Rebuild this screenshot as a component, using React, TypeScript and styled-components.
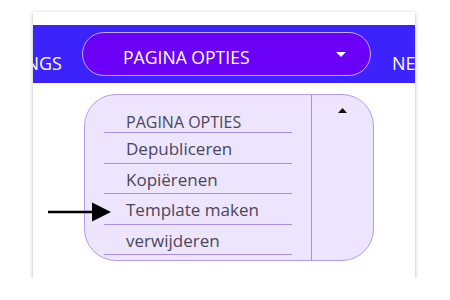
import React from "react";
import styled, { createGlobalStyle } from "styled-components";

const Global = createGlobalStyle`
  html, body { margin: 0; padding: 0; background: #ffffff; }
  body { font-family: "Open Sans", "Liberation Sans", sans-serif; }
  * { box-sizing: border-box; }
`;

const Card = styled.div`
  position: relative;
  margin: 12px 0 0 33px;
  width: 382px;
  height: 266px;
  padding-top: 13px;
  background: #ffffff;
  box-shadow: 0 1px 4px rgba(0, 0, 0, 0.28);
  overflow: hidden;
`;

const NavBar = styled.nav`
  height: 58px;
  background: #3c23fc;
  display: grid;
  grid-template-columns: minmax(0, 1fr) auto minmax(0, 1fr);
  column-gap: 20px;
  align-items: center;
  padding-left: 5px;
`;

const NavCell = styled.div<{ $side: "left" | "right" }>`
  display: flex;
  justify-content: ${(p) => (p.$side === "left" ? "flex-end" : "flex-start")};
  padding-top: 17px;
  padding-left: ${(p) => (p.$side === "right" ? "1px" : "0")};
  color: #ffffff;
  font-size: 18px;
  line-height: 22px;
  white-space: nowrap;
`;

const Pill = styled.button`
  width: 289px;
  height: 44px;
  border: 1px solid #c8a7ff;
  border-radius: 22px;
  background: #6a00f6;
  color: #ffffff;
  font-family: "Open Sans", "Liberation Sans", sans-serif;
  font-size: 17.6px;
  line-height: 22px;
  display: flex;
  align-items: center;
  justify-content: space-between;
  padding: 6px 24px 0 40px;
  cursor: pointer;
`;

const CaretSvg = styled.svg`
  display: block;
  margin-top: -6px;
`;

const Panel = styled.div`
  margin: 11px 0 0 51px;
  width: 290px;
  height: 167px;
  border: 1px solid #b59be9;
  border-radius: 32px;
  background: #ede5fe;
  display: grid;
  grid-template-columns: 1fr 62px;
  overflow: hidden;
`;

const List = styled.ul`
  list-style: none;
  margin: 0;
  padding: 7.5px 19px 0 19px;
`;

const Item = styled.li<{ $title?: boolean }>`
  height: 30.6px;
  padding: ${(p) => (p.$title ? "9.5px" : "6px")} 0 0 22px;
  border-bottom: 1px solid #a98fe0;
  color: #4b4657;
  font-size: ${(p) => (p.$title ? "16px" : "17px")};
  line-height: 20px;
  white-space: nowrap;
`;

const Side = styled.div`
  border-left: 1px solid #a98fe0;
  display: flex;
  justify-content: center;
  padding-top: 13px;
`;

const Arrow = styled.svg`
  position: absolute;
  left: 15px;
  top: 190px;
`;

const items = ["Depubliceren", "Kopiërenen", "Template maken", "verwijderen"];

export default function App() {
  return (
    <>
      <Global />
      <Card>
        <NavBar>
          <NavCell $side="left">SETTINGS</NavCell>
          <Pill>
            <span>PAGINA OPTIES</span>
            <CaretSvg width="10" height="5" viewBox="0 0 10 5">
              <polygon points="0,0 10,0 5,5" fill="#ffffff" />
            </CaretSvg>
          </Pill>
          <NavCell $side="right">NEW</NavCell>
        </NavBar>
        <Panel>
          <List>
            <Item $title>PAGINA OPTIES</Item>
            {items.map((t) => (
              <Item key={t}>{t}</Item>
            ))}
          </List>
          <Side>
            <svg width="9" height="5" viewBox="0 0 9 5">
              <polygon points="0,5 9,5 4.5,0" fill="#111111" />
            </svg>
          </Side>
        </Panel>
        <Arrow width="64" height="20" viewBox="0 0 64 20">
          <line x1="0" y1="10" x2="46" y2="10" stroke="#000" strokeWidth="2.6" />
          <polygon points="44,0.5 63,10 44,19.5" fill="#000" />
        </Arrow>
      </Card>
    </>
  );
}
